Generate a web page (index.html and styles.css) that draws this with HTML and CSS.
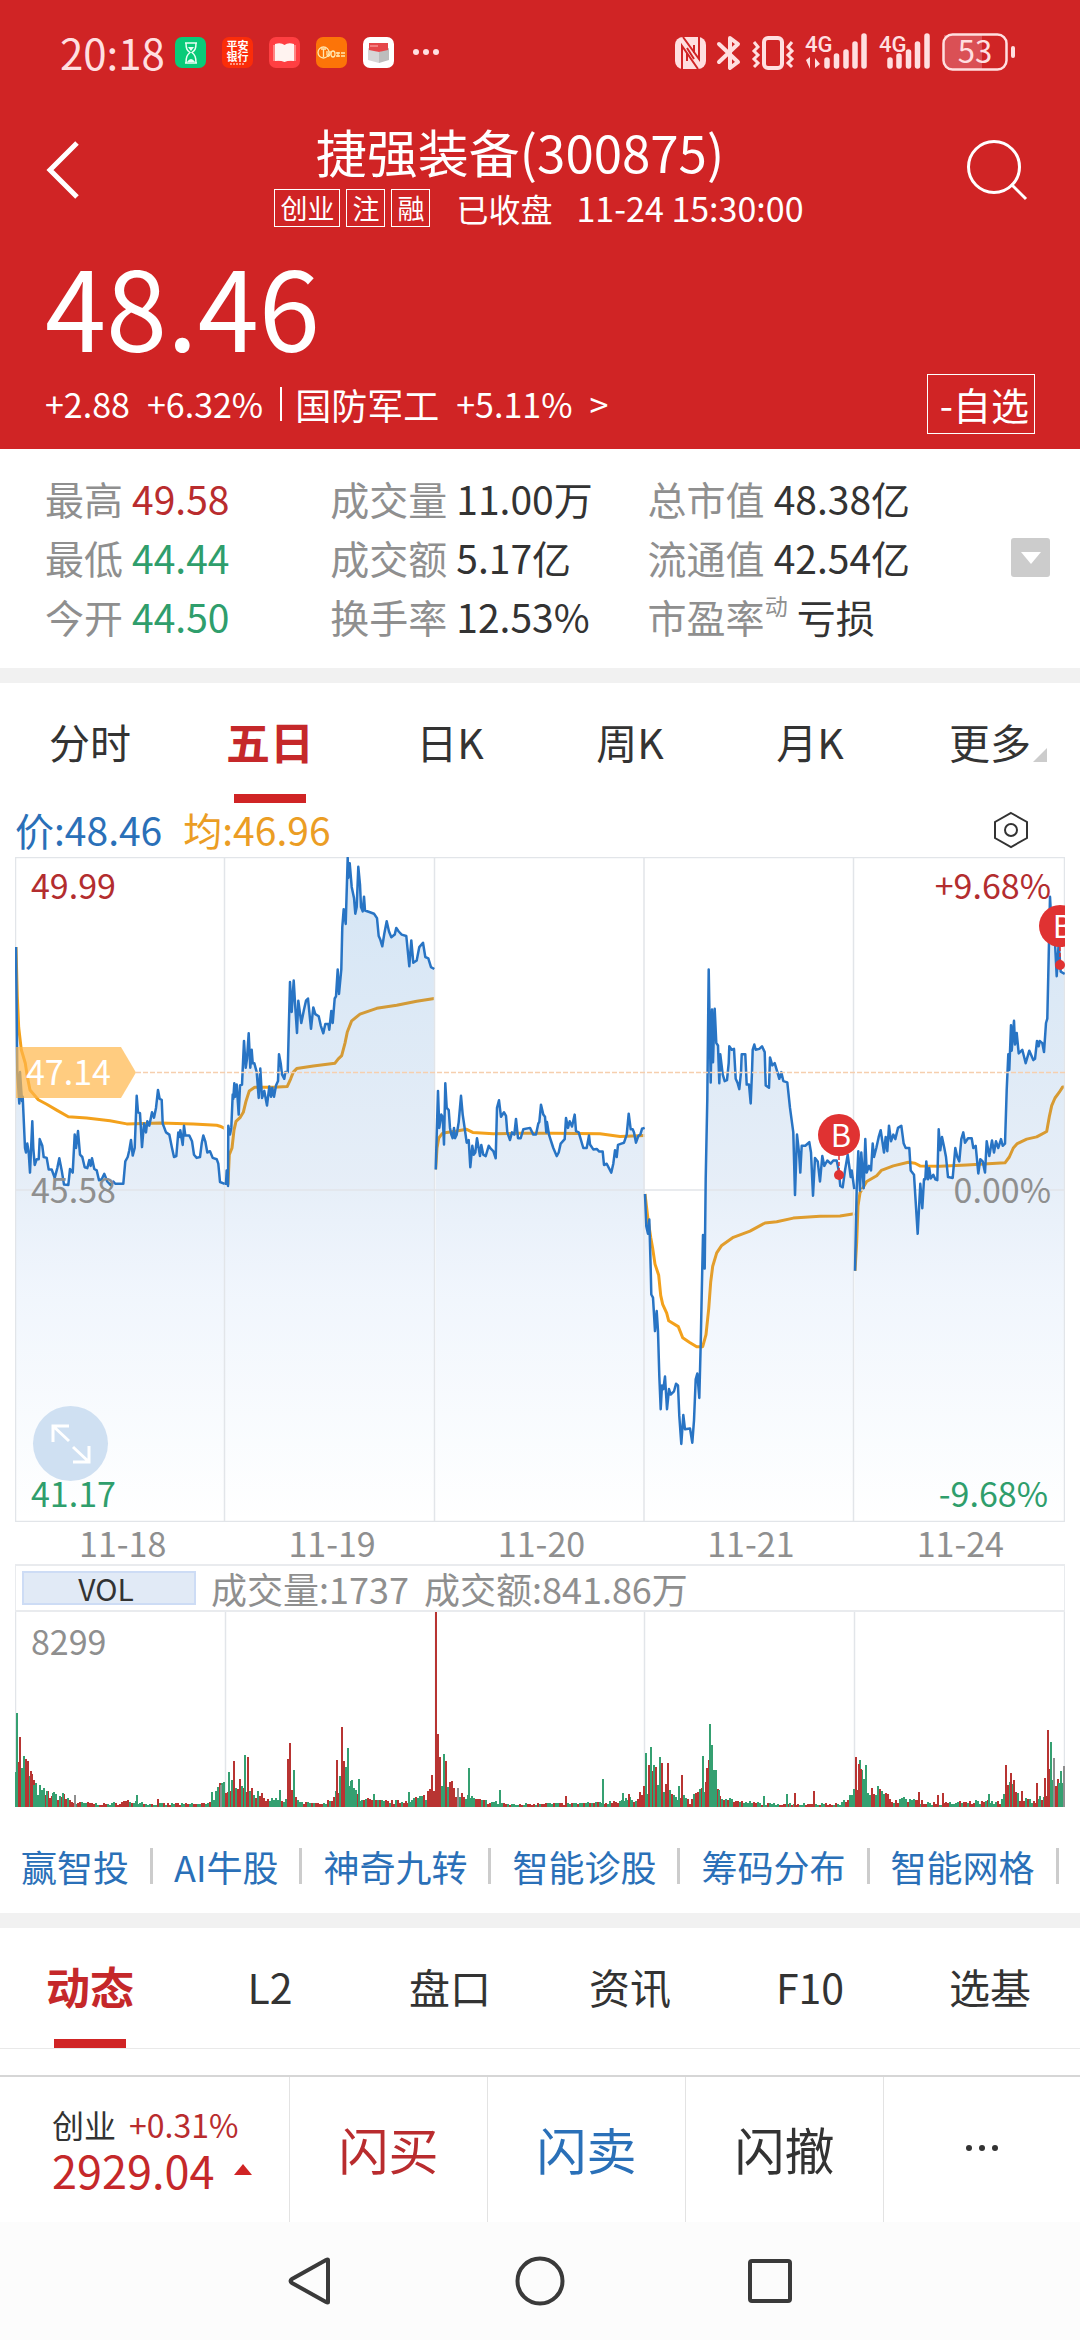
FILE: index.html
```html
<!DOCTYPE html>
<html lang="zh-CN">
<head>
<meta charset="utf-8">
<meta name="viewport" content="width=device-width, initial-scale=1">
<title>捷强装备(300875)</title>
<link rel="stylesheet" href="styles.css">
</head>
<body>
<header class="header">
  <div class="status">
    <div class="status-left">
      <span class="clock">20:18</span>
      <div class="apps">
        <svg class="app" viewBox="0 0 31 31"><rect width="31" height="31" rx="7" fill="#09cb79"/><g fill="none" stroke="#e9fff5" stroke-width="1.5"><path d="M10 6h12M10 26h12M11 6c0 6 1 7 4 9.500C12 18 11 20 11 26M21 6c0 6-1 7-4 9.500C20 18 21 20 21 26"/></g><path d="M13 10h6l-3 4zM12 25q4-6 8 0z" fill="#e9fff5"/></svg>
        <svg class="app" viewBox="0 0 31 31"><rect width="31" height="31" rx="7" fill="#fb2d09"/><text x="15.500" y="13" class="app-text">平安</text><text x="15.500" y="24" class="app-text">银行</text><path d="M8 27h15" stroke="#ffb9a5" stroke-width="1.500" stroke-dasharray="2 1"/></svg>
        <svg class="app" viewBox="0 0 31 31"><rect width="31" height="31" rx="7" fill="#ff3f42"/><path d="M4 8h23v16H4z" fill="#ff8583"/><path d="M6 7q6-2 9.500 1Q19 5 25 7v17q-5-1-9.500 1Q11 23 6 24z" fill="#fff3f0"/></svg>
        <svg class="app" viewBox="0 0 31 31"><rect width="31" height="31" rx="7" fill="#fc7408"/><g fill="none" stroke="#ffe6b0" stroke-width="1.300"><circle cx="7.500" cy="15.500" r="5.500"/><path d="M5 12h5M7.500 12v8M11 14v4q2 3 3-1v-3"/><ellipse cx="17" cy="17" rx="2" ry="3"/><path d="M20 16h4M20 19h4M25 16h4M25 19h4M22 15v5"/></g></svg>
        <svg class="app" viewBox="0 0 31 31"><rect width="31" height="31" rx="7" fill="#fff"/><path d="M5 11l11 4v11L5 23z" fill="#d6d6d6"/><path d="M26 11l-10 4v11l10-3z" fill="#bdbdbd"/><path d="M6 6h19v7l-9 2-10-2z" fill="#e5474a"/><path d="M7 9h8" stroke="#ffb7b5" stroke-width="1"/></svg>
      </div>
      <svg class="more-dots" viewBox="0 0 26 8"><g fill="#ffdfe0"><circle cx="3" cy="4" r="3"/><circle cx="13" cy="4" r="3"/><circle cx="23" cy="4" r="3"/></g></svg>
    </div>
    <svg class="signals" viewBox="0 0 342 40" aria-label="信号">
      <g fill="#ffdfe0">
        <rect x="0" y="5" width="31" height="32" rx="8"/>
        <path d="M8 5l16 22V5M7 37V14l16 23" fill="none" stroke="#d02425" stroke-width="2"/>
        <path d="M12 16l7 11M12 21v8M19 13v8" stroke="#d02425" stroke-width="2" fill="none"/>
        <path d="M44 12l19 18-8 6V6l8 6-19 18" fill="none" stroke="#ffdfe0" stroke-width="4" stroke-linejoin="round" stroke-linecap="round"/>
        <rect x="89" y="6" width="18" height="30" rx="4" fill="none" stroke="#ffdfe0" stroke-width="4"/>
        <path d="M79 10l4 5-4 4 4 4-4 4 4 4-4 4M117 10l-4 5 4 4-4 4 4 4-4 4 4 4" fill="none" stroke="#ffdfe0" stroke-width="3"/>
        <text x="130" y="20" class="net-text">4G</text>
        <path d="M131 28l4-3v12M140 26v10l5-4z"/>
        <path d="M152 28v6M161.500 24v10M171 20v14M180 12v22M189 4v30M215 28v6M224 24v10M233.500 20v14M242.500 12v22M252 4v30" stroke="#ffdfe0" stroke-width="5.500" stroke-linecap="round"/>
        <text x="204" y="20" class="net-text">4G</text>
      </g>
      <path d="M269 3h38v34h-30q-8 0-8-8z" fill="#da5055"/>
      <rect x="268.500" y="2.500" width="63" height="35" rx="9" fill="none" stroke="#ffdfe0" stroke-width="2.500"/>
      <rect x="336" y="14" width="4" height="12" rx="2" fill="#ffdfe0"/>
      <text x="300" y="31" class="battery-text">53</text>
    </svg>
  </div>

  <div class="titlebar">
    <button class="icon-btn" aria-label="返回"><svg width="34" height="60" viewBox="0 0 34 60"><path d="M31 3L4 30l27 27" fill="none" stroke="#fff" stroke-width="5"/></svg></button>
    <div class="title-block">
      <h1 class="title">捷强装备(300875)</h1>
      <div class="subtitle">
        <span class="tag">创业</span><span class="tag">注</span><span class="tag">融</span>
        <span class="closed">已收盘</span><time class="time">11-24 15:30:00</time>
      </div>
    </div>
    <button class="icon-btn" aria-label="搜索"><svg width="62" height="62" viewBox="0 0 62 62"><g fill="none" stroke="#fff" stroke-width="3"><circle cx="28" cy="28" r="25.500"/><path d="M45 45l15 15"/></g></svg></button>
  </div>

  <div class="price">48.46</div>
  <div class="change-row">
    <a class="change" href="#sector"><span>+2.88</span><span>+6.32%</span><span class="bar"></span><span class="sector">国防军工</span><span>+5.11%</span><span>&gt;</span></a>
    <button class="watch">-自选</button>
  </div>
</header>

<section class="stats">
  <dl class="stat-grid">
    <div class="stat"><dt>最高</dt><dd class="up">49.58</dd></div>
    <div class="stat"><dt>成交量</dt><dd>11.00万</dd></div>
    <div class="stat"><dt>总市值</dt><dd>48.38亿</dd></div>
    <div class="stat"><dt>最低</dt><dd class="down">44.44</dd></div>
    <div class="stat"><dt>成交额</dt><dd>5.17亿</dd></div>
    <div class="stat"><dt>流通值</dt><dd>42.54亿</dd></div>
    <div class="stat"><dt>今开</dt><dd class="down">44.50</dd></div>
    <div class="stat"><dt>换手率</dt><dd>12.53%</dd></div>
    <div class="stat"><dt>市盈率<sup class="dyn">动</sup></dt><dd>亏损</dd></div>
  </dl>
  <button class="expand" aria-label="展开"><svg width="20" height="12" viewBox="0 0 20 12"><path d="M0 0h20L10 12z" fill="#fff"/></svg></button>
</section>

<nav class="tabs period">
  <button class="tab">分时</button>
  <button class="tab active">五日</button>
  <button class="tab">日K</button>
  <button class="tab">周K</button>
  <button class="tab">月K</button>
  <button class="tab more">更多</button>
</nav>

<section class="chart">
  <div class="legend">
    <span class="blue">价:48.46</span><span class="orange">均:46.96</span>
    <button class="icon-btn gear" aria-label="设置"><svg width="36" height="38" viewBox="0 0 36 38"><g fill="none" stroke="#333" stroke-width="2"><path d="M18 2l16 9v16l-16 9-16-9V11z"/><circle cx="18" cy="19" r="6"/></g></svg></button>
  </div>

  <div class="plot">
    <svg class="plot-svg" viewBox="15 857 1050 665">
      <defs>
        <linearGradient id="fade" x1="0" y1="857" x2="0" y2="1522" gradientUnits="userSpaceOnUse">
          <stop offset="0" stop-color="#2a7fcf" stop-opacity=".2"/>
          <stop offset=".48" stop-color="#2a70c0" stop-opacity=".12"/>
          <stop offset=".65" stop-color="#3a80e0" stop-opacity=".075"/>
          <stop offset="1" stop-color="#3a90e0" stop-opacity="0"/>
        </linearGradient>
      </defs>
      <g id="average" class="average-line"></g>
      <g id="area" fill="url(#fade)"></g>
      <g class="grid-line">
        <path d="M15.500 857.500h1049v664h-1049zM15 1190h1050M224.500 857v665M434.500 857v665M644 857v665M853.500 857v665"/>
      </g>
      <g id="line" class="price-line"></g>
      <path d="M136 1072.500h929" stroke="#f6cfae" stroke-width="1.500" stroke-dasharray="5 2"/>
      <path d="M16 1047h105l15 25.500-15 25.500H16z" fill="#ffb64a" fill-opacity=".7"/>
      <text x="26" y="1085" class="axis" fill="#fff">47.14</text>
      <text x="31" y="899" class="axis" fill="#b32d2f">49.99</text>
      <text x="31" y="1203" class="axis" fill="#8f8f8f">45.58</text>
      <text x="31" y="1507" class="axis" fill="#2f9e6c">41.17</text>
      <text x="1051" y="899" class="axis end" fill="#b32d2f">+9.68%</text>
      <text x="1051" y="1203" class="axis end" fill="#8f8f8f">0.00%</text>
      <text x="1048" y="1507" class="axis end" fill="#2f9e6c">-9.68%</text>
      <g fill="#e03232">
        <circle cx="839" cy="1135" r="21"/><circle cx="839" cy="1175" r="5"/>
        <circle cx="1060" cy="926" r="21"/><circle cx="1060" cy="965" r="5"/>
        <path d="M839 1156v14M1060 947v14" stroke="#e03232" stroke-width="1.500" stroke-dasharray="4 2"/>
      </g>
      <text x="841" y="1147" class="mark">B</text>
      <text x="1063" y="938" class="mark">B</text>
    </svg>
    <button class="fullscreen" aria-label="全屏"><svg width="42" height="42" viewBox="0 0 42 42"><path d="M19 3H3v16M3 3l16 15M39 23v16H23M39 39L23 24" fill="none" stroke="#fff" stroke-width="3"/></svg></button>
  </div>

  <div class="dates"><span>11-18</span><span>11-19</span><span>11-20</span><span>11-21</span><span>11-24</span></div>

  <div class="vol-head">
    <button class="vol-btn">VOL</button><span>成交量:1737</span><span>成交额:841.86万</span>
  </div>
  <svg class="plot-svg" viewBox="15 1612 1050 195">
    <path class="grid-line" d="M15.500 1612v195M1064.500 1612v195M225.500 1612v195M435.500 1612v195M644.500 1612v195M854.500 1612v195"/>
    <g id="volume"></g>
    <text x="31" y="1655" class="axis" fill="#8f8f8f">8299</text>
  </svg>
</section>

<nav class="links">
  <a href="#a">赢智投</a><a href="#b">AI牛股</a><a href="#c">神奇九转</a><a href="#d">智能诊股</a><a href="#e">筹码分布</a><a href="#f">智能网格</a>
</nav>

<nav class="tabs info">
  <button class="tab active">动态</button>
  <button class="tab">L2</button>
  <button class="tab">盘口</button>
  <button class="tab">资讯</button>
  <button class="tab">F10</button>
  <button class="tab">选基</button>
</nav>

<footer class="footer">
  <div class="trade">
    <a class="index" href="#index">
      <span class="index-top"><span>创业</span><span class="red">+0.31%</span></span>
      <span class="index-value">2929.04<svg width="18" height="11" viewBox="0 0 18 11"><path d="M9 0l9 11H0z" fill="#d02425"/></svg></span>
    </a>
    <button class="trade-btn red">闪买</button>
    <button class="trade-btn blue">闪卖</button>
    <button class="trade-btn">闪撤</button>
    <button class="trade-btn" aria-label="更多"><svg width="34" height="8" viewBox="0 0 34 8"><g fill="#333"><circle cx="4" cy="4" r="3"/><circle cx="17" cy="4" r="3"/><circle cx="30" cy="4" r="3"/></g></svg></button>
  </div>
  <div class="sysnav">
    <button class="icon-btn" aria-label="后退"><svg width="46" height="50" viewBox="0 0 46 50"><path d="M41 4v42q0 1-2 0L5 27q-3-2 0-4L39 4q2-1 2 0z" fill="none" stroke="#3a3a3a" stroke-width="4"/></svg></button>
    <button class="icon-btn" aria-label="主页"><svg width="50" height="50" viewBox="0 0 50 50"><circle cx="25" cy="25" r="22.500" fill="none" stroke="#3a3a3a" stroke-width="4"/></svg></button>
    <button class="icon-btn" aria-label="最近"><svg width="46" height="46" viewBox="0 0 46 46"><rect x="3" y="3" width="40" height="40" rx="2" fill="none" stroke="#3a3a3a" stroke-width="4"/></svg></button>
  </div>
</footer>
<script src="chart.js"></script>
</body>
</html>
```
FILE: styles.css
```css
* { box-sizing: border-box; }

body {
  margin: 0;
  min-height: 100vh;
  display: flex;
  flex-direction: column;
  background: #fff;
  color: #333;
  font-family: "Noto Sans CJK SC", "Noto Sans", sans-serif;
}

button {
  margin: 0;
  padding: 0;
  border: 0;
  background: none;
  color: inherit;
  font: inherit;
}

a { color: inherit; text-decoration: none; }
svg { display: block; }

.red, .up { color: #b92c2e; }
.down { color: #2f9e6c; }
.blue { color: #2a70b8; }
.orange { color: #eb9d24; }
.icon-btn { display: flex; align-items: center; justify-content: center; }

/* header */
.header { background: #d02425; color: #fff; padding-bottom: 15px; }
.status {
  display: flex;
  justify-content: space-between;
  align-items: center;
  height: 104px;
  padding: 0 63px 0 60px;
}
.status-left { display: flex; align-items: center; }
.clock { font-size: 42px; line-height: 60px; color: #ffdfe0; }
.apps { display: flex; gap: 16px; margin-left: 10px; }
.app { width: 31px; height: 31px; }
.app-text { font-size: 11px; font-weight: 700; fill: #fff; text-anchor: middle; }
.more-dots { width: 26px; margin-left: 19px; }
.signals { width: 342px; height: 40px; overflow: visible; }
.net-text { font-family: Roboto, sans-serif; font-size: 22px; font-weight: 500; }
.battery-text { font-size: 31px; fill: #ffdfe0; text-anchor: middle; }

.titlebar {
  display: flex;
  align-items: center;
  padding: 14px 52px 0 46px;
}
.titlebar .icon-btn { margin-bottom: 6px; }
.title-block { flex: 1; text-align: center; }
.title { margin: 0; padding-right: 6px; font-size: 51px; font-weight: 400; line-height: 66px; }
.subtitle {
  display: flex;
  align-items: center;
  justify-content: center;
  margin-top: 5px;
  padding-left: 32px;
  font-size: 32px;
  line-height: 38px;
}
.tag {
  margin-right: 6px;
  padding: 0 5px;
  border: 1px solid #fff;
  font-size: 27px;
  line-height: 36px;
}
.closed { margin-left: 20px; }
.time { margin-left: 24px; font-size: 34px; }

.price {
  margin-top: 17px;
  padding-left: 45px;
  font-size: 110px;
  line-height: 120px;
}
.change-row {
  display: flex;
  align-items: center;
  justify-content: space-between;
  margin-top: 10px;
  padding: 0 45px;
}
.change { display: flex; align-items: center; gap: 17px; font-size: 34px; line-height: 48px; }
.change .bar { width: 2px; height: 34px; background: #fff; }
.change .sector { font-size: 36px; margin-left: -4px; }
.watch { border: 1px solid #fff; padding: 0 5px 0 12px; font-size: 38px; line-height: 58px; }

/* key figures */
.stats {
  display: flex;
  align-items: center;
  padding: 20px 30px 22px 45px;
  border-bottom: 15px solid #f1f1f1;
}
.stat-grid {
  flex: 1;
  display: grid;
  grid-template-columns: 285fr 317fr 363fr;
  margin: 0;
  font-size: 39px;
  line-height: 59px;
}
.stat { display: flex; gap: 9px; }
.stat dt { color: #8f8f8f; display: flex; }
.stat dd { margin: 0; }
.dyn { font-size: 23px; line-height: 36px; }
.expand {
  display: flex;
  align-items: center;
  justify-content: center;
  width: 39px;
  height: 39px;
  border-radius: 3px;
  background: #ccc;
}

/* tabs */
.tabs { display: grid; grid-template-columns: repeat(6, 1fr); }
.tab {
  position: relative;
  padding: 28px 0 33px;
  font-size: 41px;
  line-height: 60px;
}
.tab.active { color: #c5282a; font-size: 44px; font-weight: 700; }
.tab.active::after {
  content: "";
  position: absolute;
  left: 50%;
  bottom: 1px;
  width: 72px;
  height: 9px;
  margin-left: -36px;
  background: #d02425;
}
.tab.more::after {
  content: "";
  position: absolute;
  right: 33px;
  bottom: 42px;
  border-left: 14px solid transparent;
  border-bottom: 14px solid #ccc;
}
.info { border-bottom: 1px solid #e9e9e9; }
.info .tab { padding-bottom: 32px; }
.info .tab.active::after { bottom: 0; }

/* chart */
.legend {
  display: flex;
  align-items: center;
  gap: 21px;
  padding: 0 36px 2px 0;
  font-size: 39px;
  line-height: 51px;
}
.gear { margin-left: auto; }
.chart { padding: 0 15px; }
.plot { position: relative; }
.plot-svg { width: 100%; }
.grid-line { fill: none; stroke: #e2e5e9; stroke-width: 1.500; }
.price-line { fill: none; stroke: #2874c4; stroke-width: 2.500; stroke-linejoin: round; }
.average-line { fill: none; stroke: #f3a11c; stroke-width: 3; stroke-linejoin: round; }
.axis { font-size: 34px; }
.axis.end { text-anchor: end; }
.mark { font-size: 31px; fill: #fff; text-anchor: middle; }
.fullscreen {
  position: absolute;
  left: 18px;
  bottom: 41px;
  display: flex;
  align-items: center;
  justify-content: center;
  width: 75px;
  height: 75px;
  border-radius: 50%;
  background: #cfe0f2;
}
.dates {
  display: grid;
  grid-template-columns: repeat(5, 1fr);
  padding-left: 3px;
  color: #8f8f8f;
  font-size: 34px;
  line-height: 42px;
  text-align: center;
}
.vol-head {
  display: flex;
  align-items: center;
  gap: 15px;
  height: 48px;
  padding-left: 6px;
  border: 1px solid #e9ebee;
  border-width: 2px 1px;
  color: #8f8f8f;
  font-size: 36px;
  line-height: 44px;
}
.vol-btn {
  width: 174px;
  padding-right: 6px;
  border: 2px solid #cddcf5;
  background: #e1eaf6;
  color: #333;
  font-size: 30px;
  line-height: 30px;
}

/* feature links */
.links {
  display: flex;
  padding: 29px 0 17px;
  border-bottom: 15px solid #f1f1f1;
  color: #2a70b8;
  font-size: 36px;
  line-height: 60px;
  overflow: hidden;
}
.links a { display: flex; align-items: center; flex: none; padding-left: 21px; }
.links a::after { content: ""; width: 3px; height: 36px; margin-left: 21px; background: #ccc; }

/* bottom bars */
.footer { margin-top: auto; }
.trade {
  display: grid;
  grid-template-columns: 289fr 198fr 198fr 198fr 197fr;
  border-top: 2px solid #d6d6d6;
}
.index {
  display: flex;
  flex-direction: column;
  justify-content: center;
  padding: 0 0 4px 52px;
  color: #333;
}
.index-top { display: flex; gap: 13px; font-size: 32px; line-height: 44px; }
.index-value {
  display: flex;
  align-items: center;
  gap: 20px;
  color: #c5282a;
  font-size: 45px;
  line-height: 48px;
}
.trade-btn {
  display: flex;
  align-items: center;
  justify-content: center;
  padding-bottom: 3px;
  border-left: 1px solid #e3e3e3;
  font-size: 50px;
  line-height: 142px;
}
.sysnav {
  display: flex;
  justify-content: center;
  align-items: center;
  gap: 182px;
  height: 118px;
  background: #fcfcfc;
}
```
FILE: chart.js
```js
// One entry per trading day. Points are in plot units: x from `left`, 3 per pixel; y from 840, 2.24 per pixel.
const days = [
  { left: 0,
    price: "48,240 52,520 58,590 60,520 66,585 68,575 75,690 78,700 82,680 86,700 90,745 97,630 100,690 104,728 110,715 116,715 119,670 127,685 131,710 140,712 146,738 155,738 164,757 172,735 178,713 185,740 192,772 205,773 210,737 218,745 224,660 228,690 234,652 240,705 247,710 254,733 262,735 268,717 272,730 276,713 283,737 290,740 297,762 305,760 313,748 322,765 332,773 340,765 346,770 370,770 376,720 383,710 388,695 393,672 398,707 404,690 410,573 414,610 420,612 426,688 432,635 438,655 442,630 448,640 456,610 462,622 468,600 474,560 479,580 485,582 488,635 498,655 508,660 516,690 522,710 529,708 535,655 540,665 541,650 548,683 552,640 556,662 568,662 576,675 582,705 590,712 600,710 605,680 610,662 616,675 622,700 630,697 638,712 650,715 655,725 660,766 674,770",
    average: "48,240 52,350 56,420 64,470 76,500 82,530 90,560 115,582 140,592 170,605 205,620 260,623 330,629 380,636 480,634 580,636 650,639 660,641 674,646" },
  { left: 0,
    price: "674,770 678,770 680,740 684,775 685,640 690,660 694,645 698,570 700,580 703,545 706,575 710,548 716,615 720,550 726,548 732,450 737,510 741,490 746,433 751,510 755,470 758,500 763,500 770,520 776,578 781,512 786,578 793,562 801,595 808,552 813,575 817,555 822,575 828,550 834,540 837,480 842,500 846,525 853,535 856,520 863,520 866,430 870,318 875,385 881,315 886,375 891,432 895,360 904,410 912,380 918,360 924,355 933,423 940,375 946,390 956,395 962,415 970,433 976,412 985,412 988,425 994,383 998,410 1004,355 1008,350 1013,290 1017,345 1024,290 1027,195 1031,155 1037,188 1043,40 1045,85 1049,52 1055,105 1062,130 1066,165 1070,150 1075,60 1080,100 1083,150 1088,160 1092,127 1095,158 1110,162 1122,165 1131,175 1136,215 1141,223 1147,238 1153,210 1160,182 1167,205 1174,218 1184,212 1189,197 1196,205 1205,212 1219,215 1228,283 1234,225 1240,275 1250,270 1258,240 1269,230 1276,262 1285,265 1293,285 1303,289",
    average: "684,772 688,705 696,690 702,650 708,630 720,622 730,610 738,585 748,562 764,554 820,554 862,552 872,535 880,520 890,512 940,506 1005,500 1015,490 1025,483 1035,455 1042,430 1055,405 1080,390 1130,377 1190,370 1250,361 1303,355" },
  { left: 420,
    price: "47,738 54,562 58,645 64,615 68,620 72,682 76,545 80,600 86,605 90,645 94,660 98,668 102,645 105,668 110,660 116,632 123,573 128,615 132,635 140,678 146,672 151,733 157,685 161,705 166,700 171,668 180,708 184,683 190,705 197,708 206,685 213,692 220,697 227,713 231,600 237,583 243,620 252,610 258,618 262,655 270,672 276,655 283,660 288,625 294,668 302,668 310,648 330,645 340,660 348,660 355,635 358,632 363,593 370,615 375,620 379,655 381,632 387,660 392,672 400,690 410,708 416,700 422,680 434,670 438,623 444,645 449,630 456,642 464,615 468,652 476,655 482,670 490,690 500,690 507,662 510,682 520,693 530,692 538,698 548,698 552,728 560,725 574,745 580,725 585,695 590,710 594,683 604,680 612,678 620,660 626,613 632,648 638,648 642,655 648,678 655,663 661,660 666,647 674,645",
    average: "47,738 51,690 56,668 66,658 80,655 110,652 140,648 158,655 220,658 300,657 400,657 540,658 600,664 674,662" },
  { left: 420,
    price: "675,793 679,865 684,882 688,850 692,960 694,1018 699,1025 705,1100 710,1055 714,1100 718,1200 722,1275 726,1222 730,1230 735,1202 741,1275 747,1230 752,1242 762,1235 768,1218 774,1222 778,1290 784,1353 790,1288 795,1320 810,1318 817,1350 822,1300 827,1208 832,1195 838,1250 842,1130 845,1020 849,885 854,960 857,760 862,580 866,290 872,543 876,380 879,498 884,378 889,455 894,460 898,545 901,480 908,525 914,540 921,538 926,500 928,462 935,470 942,468 947,535 953,545 958,558 963,520 965,480 976,480 980,548 987,548 992,590 996,520 998,470 1003,458 1007,470 1018,468 1026,462 1034,475 1037,550 1047,555 1050,487 1057,505 1064,500 1070,515 1078,535 1084,520 1090,540 1102,543 1110,600 1120,655 1125,795 1131,660 1137,700 1141,745 1145,685 1156,685 1168,677 1173,700 1179,797 1185,712 1193,720 1200,765 1207,708 1213,730 1222,718 1232,725 1240,718 1250,718 1256,740 1261,775 1268,778 1275,740 1283,705 1292,755 1295,740 1303,782",
    average: "675,793 684,850 692,890 698,915 705,950 716,975 722,1020 728,1040 740,1060 746,1077 775,1090 788,1115 808,1125 830,1135 848,1135 858,1108 866,1050 872,990 878,955 890,925 905,908 940,890 990,876 1035,858 1070,855 1120,847 1200,843 1260,842 1303,837" },
  { left: 740,
    price: "345,965 350,780 355,697 360,785 364,700 371,780 376,670 380,745 387,730 393,740 398,680 402,710 409,690 416,665 422,650 432,700 437,665 442,697 447,640 453,675 460,660 466,670 474,645 484,640 491,680 497,690 508,690 512,740 522,750 533,882 541,770 547,825 552,760 556,760 559,720 564,760 568,735 572,758 580,750 586,760 592,762 596,648 601,695 606,665 613,690 618,710 624,755 638,757 646,690 652,710 658,720 664,670 670,655 675,678 684,668 695,668 700,690 707,685 715,747 721,715 728,720 735,745 740,675 748,708 756,673 762,700 768,675 775,690 783,670 788,685 795,680 800,560 805,480 808,515 813,415 815,472 822,405 825,458 830,432 836,478 847,470 857,500 868,472 880,493 885,490 891,450 896,462 899,450 907,455 912,475 918,410 922,400 926,260 930,127 936,210 945,230 950,305 956,230 962,295 974,300",
    average: "345,965 350,900 354,820 360,790 368,780 380,765 410,752 424,740 460,730 505,722 525,724 540,730 600,731 680,728 795,723 808,710 820,690 832,680 860,670 890,665 920,653 928,620 935,595 945,578 958,565 968,553 974,553" }
];

const svg = (parent, name, attrs) => {
  const el = document.createElementNS("http://www.w3.org/2000/svg", name);
  for (const key in attrs) el.setAttribute(key, attrs[key]);
  document.getElementById(parent).appendChild(el);
};
const toPlot = (text, left) => text.split(" ").map(p => {
  const [x, y] = p.split(",").map(Number);
  return [Math.round((left + x / 3) * 10) / 10, Math.round((840 + y / 2.24) * 10) / 10];
});

for (const day of days) {
  const price = toPlot(day.price, day.left);
  const first = price[0][0], last = price[price.length - 1][0];
  svg("average", "polyline", { points: toPlot(day.average, day.left).join(" ") });
  svg("area", "polygon", { points: `${first},1522 ${price.join(" ")} ${last},1522` });
  svg("line", "polyline", { points: price.join(" ") });
}

// Volume: a base level along the axis, with the tall bars listed one by one.
const level = [[15,60],[22,45],[30,34],[36,18],[50,12],[65,10],[75,4],[110,3],[135,6],[150,3],[205,3],[212,8],[222,20],[235,26],[242,18],[248,26],[256,12],[270,8],[285,5],[292,18],[300,4],[325,3],[335,12],[345,34],[352,20],[360,10],[370,6],[390,5],[400,5],[425,10],[432,20],[440,40],[448,22],[460,12],[480,6],[500,4],[515,2],[540,4],[560,3],[600,4],[635,8],[645,18],[655,30],[665,20],[675,8],[683,14],[690,4],[705,24],[712,40],[718,18],[725,9],[740,5],[770,3],[840,3],[852,10],[860,34],[870,20],[880,14],[895,6],[910,8],[920,5],[940,3],[970,5],[1000,5],[1010,22],[1020,8],[1035,6],[1045,14],[1052,34],[1058,22],[1065,22]];
const peaks = "17,94,g 20,70,r 26,48,r 31,36,r 34,22,g 47,16,g 53,14,g 63,14,g 75,12,n 137,12,g 158,8,r 212,15,g 221,22,n 229,35,g 234,46,r 245,52,g 248,50,r 258,16,g 280,17,g 288,48,r 290,64,r 294,37,g 337,47,r 342,80,r 344,46,r 348,59,g 351,26,g 359,28,g 374,13,g 409,15,g 432,32,r 436,195,r 438,73,r 440,50,r 444,53,g 446,46,r 458,19,n 469,39,g 500,17,g 566,11,r 603,28,g 623,14,g 629,13,r 646,54,g 649,42,r 651,60,g 654,42,g 660,50,g 662,44,r 668,44,r 679,21,g 682,32,r 696,14,r 703,51,g 707,39,r 709,47,r 710,83,g 712,62,g 716,37,g 719,17,g 764,11,g 787,13,g 795,14,r 814,16,r 850,12,g 856,50,r 859,43,r 861,38,r 864,28,g 866,42,g 878,21,g 880,18,r 919,15,r 938,12,r 943,14,r 989,13,g 1006,42,r 1011,34,r 1014,27,r 1022,16,r 1037,24,r 1045,29,r 1048,77,r 1051,65,g 1054,49,n 1059,24,g 1061,36,g 1064,41,n";
const inks = { r: "#b83432", g: "#35a071", n: "#8f8f8f" };
const bar = (x, h, ink) => svg("volume", "rect", { x: x - 1, y: 1807 - h, width: 2, height: h, fill: inks[ink] });

let seed = 7;
const noise = () => (seed = (seed * 16807) % 2147483647) / 2147483647;
let k = 0;
for (let x = 16; x < 1065; x += 2) {
  while (level[k + 1][0] < x) k++;
  const [x0, h0] = level[k], [x1, h1] = level[k + 1];
  const base = h0 + (h1 - h0) * (x - x0) / (x1 - x0);
  bar(x, Math.max(1, Math.round(base * (0.6 + noise() * 0.8))), noise() < 0.5 ? "r" : "g");
}
for (const peak of peaks.split(" ")) {
  const [x, h, ink] = peak.split(",");
  bar(Number(x), Number(h), ink);
}
```
